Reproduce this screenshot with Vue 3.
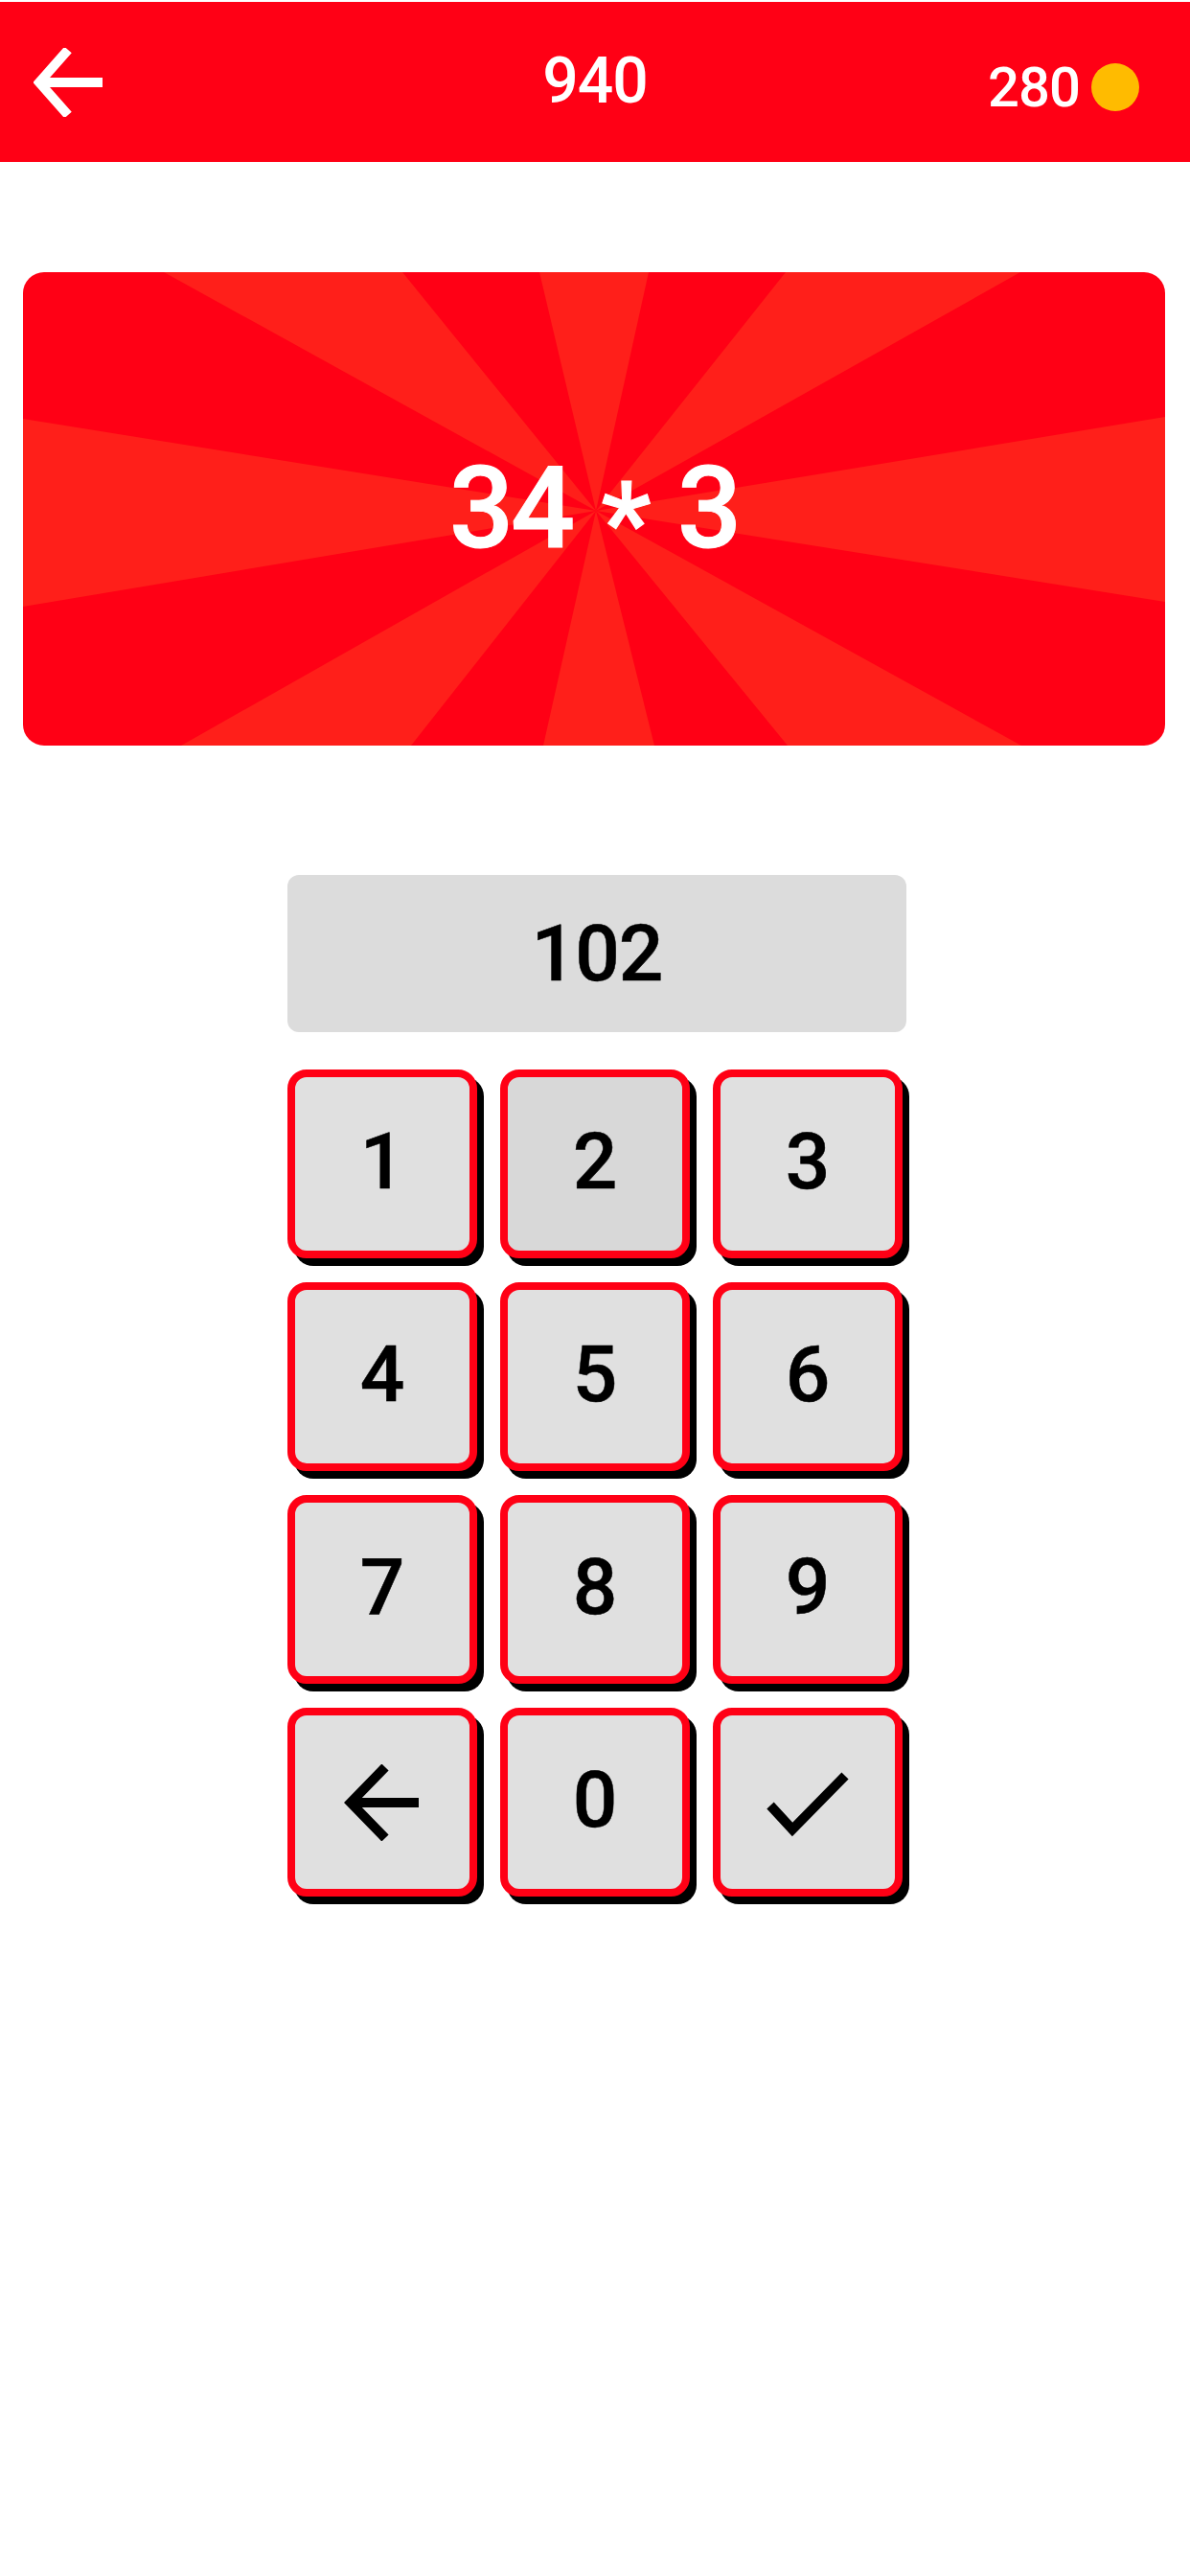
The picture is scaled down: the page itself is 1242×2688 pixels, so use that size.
<template>
  <div class="page">
    <header class="topbar">
      <button class="back" aria-label="返回">
        <svg width="72" height="72" viewBox="0 0 72 72" fill="none" stroke="#fff" stroke-width="10">
          <path d="M36 2 L6 36 L36 70" />
          <path d="M6 36 H72" />
        </svg>
      </button>
      <div class="level">940</div>
      <div class="coins">
        <span>280</span>
        <i class="coin"></i>
      </div>
    </header>

    <section class="banner">
      <svg class="rays" viewBox="0 0 1192 494" preserveAspectRatio="none">
        <polygon
          v-for="(ray, i) in rays"
          :key="i"
          :points="ray"
          fill="#ff1f1a"
        />
      </svg>
      <div class="question">34 <span class="op">*</span> 3</div>
    </section>

    <div class="answer">102</div>

    <div class="keypad">
      <button
        v-for="k in keys"
        :key="k"
        class="key"
        :class="{ 'key--active': k === '2' }"
      >
        <svg v-if="k === 'back'" class="key__icon" width="80" height="80" viewBox="0 0 80 80" fill="none" stroke="#000" stroke-width="10">
          <path d="M43 3 L7 40 L43 77" />
          <path d="M7 40 H78" />
        </svg>
        <svg v-else-if="k === 'ok'" class="key__icon key__icon--ok" width="86" height="68" viewBox="0 0 86 68" fill="none" stroke="#000" stroke-width="10">
          <path d="M4 35 L27 60 L82 4" />
        </svg>
        <template v-else>{{ k }}</template>
      </button>
    </div>
  </div>
</template>

<script setup>
const keys = ['1', '2', '3', '4', '5', '6', '7', '8', '9', 'back', '0', 'ok']

// 光束的中心点和两端，坐标相对横幅左上角
const cx = 598
const cy = 249
const rays = [
  [[147, 0], [396, 0]],
  [[539, 0], [653, 0]],
  [[796, 0], [1041, 0]],
  [[1192, 151], [1192, 344]],
  [[1042, 494], [798, 494]],
  [[659, 494], [543, 494]],
  [[405, 494], [165, 494]],
  [[0, 349], [0, 153]],
].map(([a, b]) => `${cx},${cy} ${a.join(',')} ${b.join(',')}`)
</script>

<style scoped>
.page {
  width: 1242px;
  height: 2688px;
  background: #fff;
  font-family: Roboto, "Liberation Sans", sans-serif;
  font-weight: 500;
  padding-top: 2px;
  box-sizing: border-box;
  overflow: hidden;
}

.topbar {
  height: 167px;
  background: #ff0015;
  color: #fff;
  display: grid;
  grid-template-columns: 1fr auto 1fr;
  align-items: center;
  padding: 0 53px;
}

.back {
  display: flex;
  margin-left: -18px;
  padding: 0;
  border: none;
  background: none;
}

.level {
  font-size: 66px;
  line-height: 1;
  margin-top: -2px;
  letter-spacing: -1px;
}

.coins {
  justify-self: end;
  display: flex;
  align-items: center;
  gap: 12px;
  font-size: 58px;
  line-height: 1;
  margin-top: 10px;
  letter-spacing: -1px;
}

.coin {
  width: 50px;
  height: 50px;
  border-radius: 50%;
  background: #ffbb00;
}

.banner {
  position: relative;
  margin: 115px 26px 0 24px;
  height: 494px;
  border-radius: 22px;
  overflow: hidden;
  background: #ff0015;
  display: flex;
  align-items: center;
  justify-content: center;
  color: #fff;
}

.rays {
  position: absolute;
  inset: 0;
  width: 100%;
  height: 100%;
}

.question {
  position: relative;
  font-size: 118px;
  line-height: 1;
  letter-spacing: -3px;
  word-spacing: 4px;
  -webkit-text-stroke: 1px #fff;
}

.op {
  display: inline-block;
  transform: translateY(16px);
}

.answer {
  margin: 135px 0 0 300px;
  width: 646px;
  height: 164px;
  border-radius: 12px;
  background: #dcdcdc;
  color: #000;
  font-size: 82px;
  letter-spacing: -1px;
  -webkit-text-stroke: 0.5px #000;
  display: flex;
  align-items: center;
  justify-content: center;
}

.keypad {
  margin: 39px 0 0 300px;
  display: grid;
  grid-template-columns: repeat(3, 198px);
  grid-auto-rows: 197px;
  column-gap: 24px;
  row-gap: 25px;
}

.key {
  box-sizing: border-box;
  border: 8px solid #ff0015;
  border-radius: 20px;
  background: #e0e0e0;
  box-shadow: 7px 8px 0 #000;
  color: #000;
  font-family: inherit;
  font-weight: 500;
  font-size: 82px;
  line-height: 1;
  -webkit-text-stroke: 0.5px #000;
  padding: 0 0 5px;
  display: flex;
  align-items: center;
  justify-content: center;
}

.key__icon {
  margin-top: 5px;
}

.key__icon--ok {
  margin-top: 9px;
}

.key--active {
  background: #d8d8d8;
}
</style>

<style>
html,
body {
  margin: 0;
  background: #fff;
}
</style>
